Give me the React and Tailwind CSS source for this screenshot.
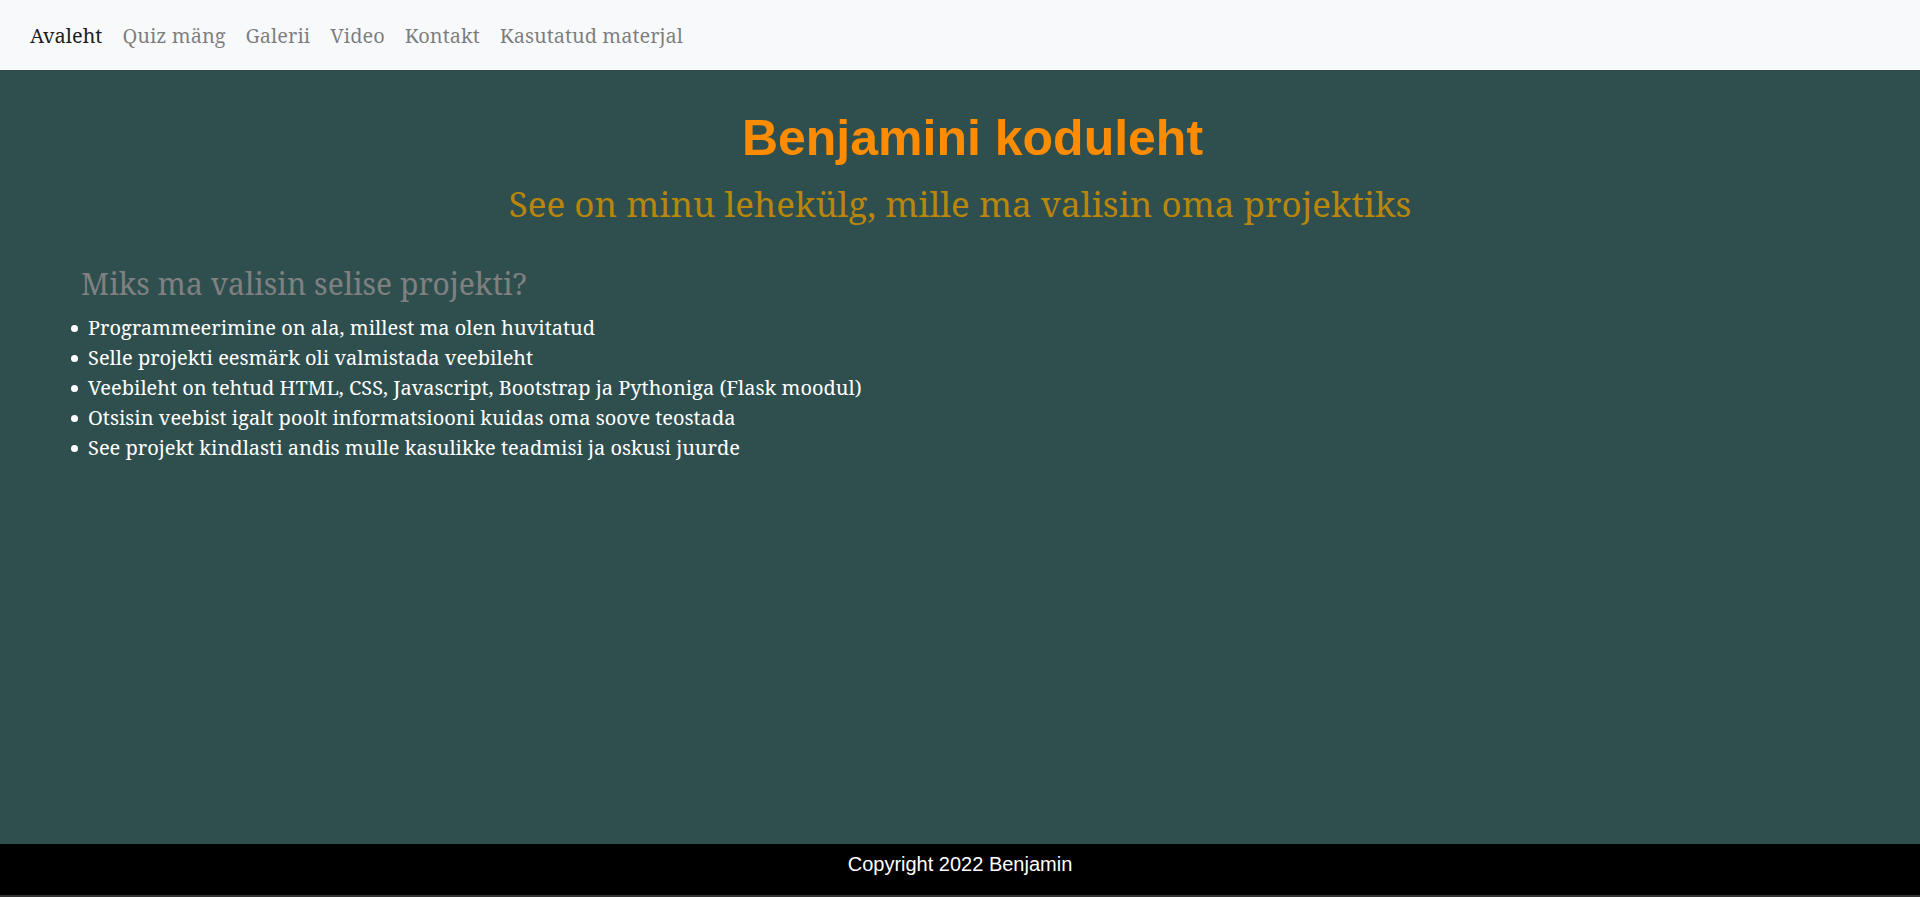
const links = ["Avaleht", "Quiz mäng", "Galerii", "Video", "Kontakt", "Kasutatud materjal"];
const reasons = [
  "Programmeerimine on ala, millest ma olen huvitatud",
  "Selle projekti eesmärk oli valmistada veebileht",
  "Veebileht on tehtud HTML, CSS, Javascript, Bootstrap ja Pythoniga (Flask moodul)",
  "Otsisin veebist igalt poolt informatsiooni kuidas oma soove teostada",
  "See projekt kindlasti andis mulle kasulikke teadmisi ja oskusi juurde",
];

export default function App() {
  return (
    <div className="flex min-h-screen flex-col bg-[#2f4f4f] font-['Noto_Serif','Droid_Serif',serif] text-xl text-white">
      <nav className="bg-[#f8f9fa] px-5 pt-2 pb-1.5">
        <ul className="flex flex-wrap py-1">
          {links.map((label, i) => (
            <li key={label}>
              <a href="#" className={i === 0 ? "block px-2.5 py-2.5 text-black/90" : "block px-2.5 py-2.5 text-black/50"}>
                {label}
              </a>
            </li>
          ))}
        </ul>
      </nav>
      <main className="grow">
        <h1 className="mt-[38px] pl-[25px] text-center font-['Liberation_Sans',sans-serif] text-[50px] leading-[60px] font-bold text-[#ff8c00]">
          Benjamini koduleht
        </h1>
        <h2 className="mt-[15px] text-center text-[35px] leading-[42px] text-[#b8860b]">
          See on minu lehekülg, mille ma valisin oma projektiks
        </h2>
        <h3 className="mt-[41px] pl-[81px] text-[30px] leading-9 text-[#808080]">Miks ma valisin selise projekti?</h3>
        <ul className="mt-[11px] list-disc pl-[91px] font-['Liberation_Sans',sans-serif] text-[22px] leading-[30px]">
          {reasons.map((reason) => (
            <li key={reason}>
              <span className="-ml-[3px] font-['Noto_Serif','Droid_Serif',serif] text-[20px]">{reason}</span>
            </li>
          ))}
        </ul>
      </main>
      <footer className="border-b-2 border-[#333] bg-black pt-1.5 pb-[17px] text-center font-['Liberation_Sans',sans-serif]">
        <p>Copyright 2022 Benjamin</p>
      </footer>
    </div>
  );
}
